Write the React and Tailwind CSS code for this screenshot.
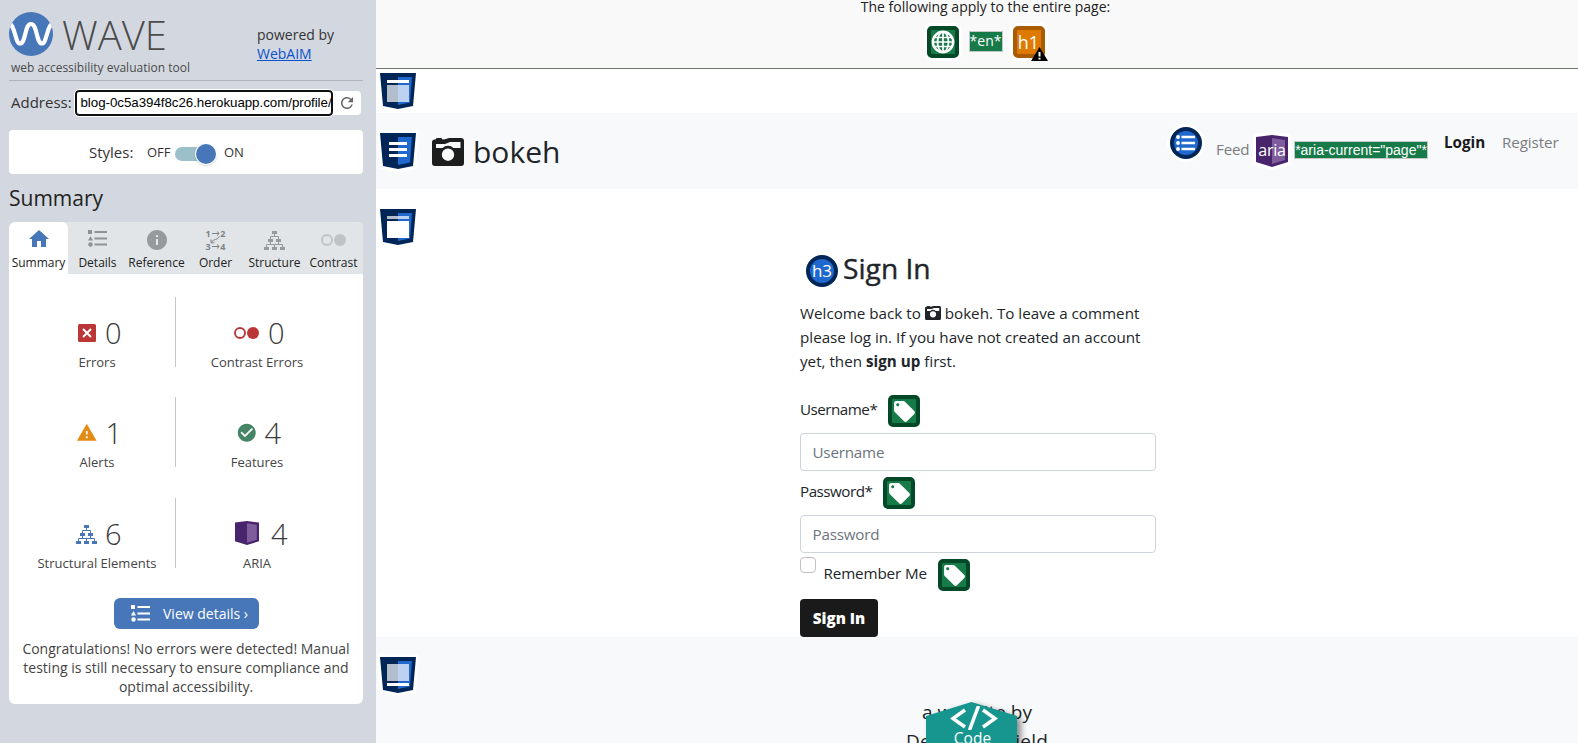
import React from 'react';
import { MdHome, MdInfo, MdCheckCircle, MdWarning, MdRefresh, MdLocalOffer } from 'react-icons/md';

function Logo() {
  return (
    <svg viewBox="0 0 44 44" className="size-11 shrink-0">
      <defs>
        <clipPath id="logo-disc"><circle cx="22" cy="22" r="22" /></clipPath>
      </defs>
      <circle cx="22" cy="22" r="22" fill="#4777b8" />
      <path clipPath="url(#logo-disc)" d="M-1 11C6 11 6 31.500 11 31.500C17 31.500 15.500 12 22 12C28.500 12 27 31.500 33 31.500C38 31.500 38 11 45 11" fill="none" stroke="#fff" strokeWidth="4.200" />
    </svg>
  );
}

function CameraIcon({ className }) {
  return (
    <svg viewBox="0 0 32 32" className={className} fill="currentColor" fillRule="evenodd">
      <path d="M4 2.500Q4 2 5 2H9Q10 2 10 3.200L12 3.500 17 2H29Q32 2 32 5V27Q32 30 29 30H3Q0 30 0 27V6Q0 3.500 4 3.200ZM4 8V12H10.500A8 8 0 0 1 21.500 12H28.500V6H18L13 8ZM16 12.500A6.200 6.200 0 1 0 16 24.900 6.200 6.200 0 1 0 16 12.500Z" />
    </svg>
  );
}

function ListIcon({ className }) {
  return (
    <svg viewBox="0 0 19 17" className={className} fill="currentColor">
      <rect x="0" y="0" width="4" height="4" />
      <path d="M2.500 6 5 10.500H0Z" />
      <circle cx="2.500" cy="14.500" r="2.200" />
      <rect x="6.500" y="1" width="12.500" height="2" />
      <rect x="6.500" y="7.500" width="12.500" height="2" />
      <rect x="6.500" y="13.500" width="12.500" height="2" />
    </svg>
  );
}

function TreeIcon({ className }) {
  return (
    <svg viewBox="0 0 21 19" className={className}>
      <path d="M10.500 2V6M6.500 8.500V5.500H14.500V8.500M6.500 9V13M14.500 9V13M2.500 17V13.500H18.500V17M10.500 13.500V17" fill="none" stroke="currentColor" />
      <path d="M8 0h5v3H8zM4 8h5v3H4zM12 8h5v3h-5zM0 16h5v3H0zM8 16h5v3H8zM16 16h5v3h-5z" fill="currentColor" />
    </svg>
  );
}

function CirclesIcon({ className }) {
  return (
    <svg viewBox="0 0 25 12" className={className}>
      <circle cx="6" cy="6" r="5" fill="none" stroke="currentColor" strokeWidth="1.900" />
      <circle cx="19" cy="6" r="6" fill="currentColor" />
    </svg>
  );
}

function OrderIcon() {
  return (
    <div className="relative flex h-[22px] w-5 flex-col justify-between text-[9px] leading-[9px] font-bold text-[#7f8386]">
      <div className="flex justify-between"><span>1</span><span>2</span></div>
      <div className="flex justify-between"><span>3</span><span>4</span></div>
      <svg viewBox="0 0 20 22" className="absolute inset-0 h-[22px] w-5" fill="none" stroke="currentColor" strokeWidth="1">
        <path d="M6 4.500H13M11 2.500 13.200 4.500 11 6.500M6 17.500H13M11 15.500 13.200 17.500 11 19.500M13.500 7.500Q12 10 9.500 10.500T5 13.500M5 10.500V13.800H8.500" />
      </svg>
    </div>
  );
}

function AriaBox({ className }) {
  return (
    <svg viewBox="0 0 32 32" className={className}>
      <path d="M0 2 16 0 32 2V27L16 32 0 27Z" fill="#48246d" />
      <path d="M16 3 29 5V25L16 29Z" fill="#7f5c9c" />
    </svg>
  );
}

function Shield({ children, halo }) {
  return (
    <svg viewBox="-3 -3 42 42" className="size-[42px] shrink-0">
      {halo && <path d="M-3 -3H39L36 36 18 39 0 36Z" fill="#fff" />}
      <path d="M0 0H36L33 33 18 36 3 33Z" fill="#002658" />
      <path d="M18 4H32L30 29.500 18 32Z" fill="#1f69ce" />
      {children}
    </svg>
  );
}

function TagIcon() {
  return (
    <span className="flex size-8 shrink-0 items-center justify-center rounded-[5px] border-4 border-[#034927] bg-[#177a49] text-white">
      <MdLocalOffer className="size-[25px] shrink-0" />
    </span>
  );
}

function GlobeIcon() {
  return (
    <span className="flex size-8 shrink-0 items-center justify-center rounded-[5px] border-4 border-[#034927] bg-[#177a49] ring-3 ring-white">
      <svg viewBox="0 0 24 24" className="size-6 shrink-0" fill="none" stroke="#fff" strokeWidth="1.800">
        <circle cx="12" cy="12" r="10.200" strokeWidth="2.400" />
        <ellipse cx="12" cy="12" rx="5.500" ry="10" />
        <path d="M12 2V22M3.200 7.500H20.800M2 12H22M3.200 16.500H20.800" strokeWidth="1.700" />
      </svg>
    </span>
  );
}

function HeadingIcon() {
  return (
    <div className="relative size-8 shrink-0">
      <span className="flex size-8 items-center justify-center rounded-[5px] border-4 border-[#aa5b00] bg-[#de7a02] text-[18px] leading-6 text-white ring-3 ring-white">h1</span>
      <svg viewBox="0 0 17 14" className="absolute top-[21px] left-[18px] h-[14px] w-[17px]">
        <path d="M8.500 0 17 14H0Z" />
        <path d="M7.500 5h2v4.500h-2zM7.500 10.800h2v1.700h-2z" fill="#fff" />
      </svg>
    </div>
  );
}

const tabs = [
  { label: 'Summary', icon: <MdHome className="size-6 text-[#4777b8]" />, active: true },
  { label: 'Details', icon: <ListIcon className="h-[17px] w-[19px] text-[#8f9294]" /> },
  { label: 'Reference', icon: <MdInfo className="mt-[3px] size-6 text-[#979a9c]" /> },
  { label: 'Order', icon: <div className="mt-0.5"><OrderIcon /></div> },
  { label: 'Structure', icon: <TreeIcon className="mt-[3px] h-[19px] w-[21px] text-[#979a9c]" /> },
  { label: 'Contrast', icon: <CirclesIcon className="mt-0.5 h-3 w-[25px] text-[#bfc3c6]" /> },
];

function Stat({ icon, value, className, gap = 'gap-[9px]' }) {
  return (
    <div className={className}>
      <div className={`flex h-10 items-center ${gap}`}>
        {icon}
        <span className="mt-px text-[29px] leading-10 font-[350] text-[#3b3b3b]">{value}</span>
      </div>
    </div>
  );
}

function StatRow({ left, right, leftLabel, rightLabel }) {
  return (
    <div className="flex h-[70px] pl-[10px] text-[13px] leading-[18px] text-[#444]">
      <div className="w-[157px] border-r border-[#c4c6c8] pt-[15px]">
        {left}
        <div className="mt-px text-center">{leftLabel}</div>
      </div>
      <div className="w-[162px] pt-[15px]">
        {right}
        <div className="mt-px text-center">{rightLabel}</div>
      </div>
    </div>
  );
}

function Sidebar() {
  return (
    <aside className="h-[743px] w-[376px] shrink-0 bg-[#d3d8e0] pr-[13px] pl-[9px] text-[#333]">
      <header className="h-[81px] border-b border-[#b0b5ba] pt-3">
        <div className="flex h-[47px]">
          <Logo />
          <span className="ml-[9px] w-[195px] text-[40px] leading-[46px] font-light text-[#4b4b4b]">WAVE</span>
          <div className="pt-[13px] text-sm leading-[19px]">
            powered by<br /><a className="text-[#0a53cc] underline">WebAIM</a>
          </div>
        </div>
        <div className="ml-0.5 text-xs leading-[17px] text-[#4a4a4a]">web accessibility evaluation tool</div>
      </header>
      <div className="mt-2 flex h-[27px] items-center">
        <label className="ml-0.5 w-[64px] text-[15px] leading-[27px]">Address:</label>
        <div className="flex h-[26px] w-[258px] items-center overflow-hidden rounded-[4px] border-2 border-[#101010] bg-white pl-[3.500px] font-['Liberation_Sans'] text-[13.33px] tracking-[-0.040px] whitespace-nowrap text-black outline outline-white">blog-0c5a394f8c26.herokuapp.com/profile/</div>
        <div className="flex h-6 w-7 items-center justify-center rounded-r-[4px] bg-white text-[#666]"><MdRefresh className="size-[18px]" /></div>
      </div>
      <div className="mt-[14px] flex h-11 items-center rounded-[4px] bg-white pl-20">
        <span className="w-[58px] text-[15px]">Styles:</span>
        <span className="mt-0.5 w-7 text-[13px]">OFF</span>
        <span className="mt-1 flex h-[14px] w-[41px] items-center justify-end rounded-full bg-[#9cc0ca]">
          <span className="size-5 shrink-0 rounded-full bg-[#4777b8] shadow-[0_1px_3px_rgba(0,0,0,0.4)] ring-1 ring-white" />
        </span>
        <span className="mt-0.5 ml-2 text-[13px]">ON</span>
      </div>
      <h2 className="mt-[10px] text-[21px] leading-7 text-[#222]">Summary</h2>
      <section className="mt-[10px] h-[482px] overflow-hidden rounded-md bg-white">
        <nav className="flex h-[52px] bg-[#e1e5e8]">
          {tabs.map((tab) => (
            <div key={tab.label} className={`flex w-[59px] shrink-0 flex-col items-center text-xs leading-4 whitespace-nowrap text-[#222] ${tab.active ? 'rounded-t-md bg-white' : ''}`}>
              <div className="flex h-[33px] items-center justify-center">{tab.icon}</div>
              <span>{tab.label}</span>
            </div>
          ))}
        </nav>
        <div className="flex flex-col gap-[30px] pt-[23px]">
          <StatRow
            leftLabel="Errors" rightLabel="Contrast Errors"
            left={<Stat className="pl-[59px]" value="0" icon={
              <svg viewBox="0 0 18 18" className="mt-0.5 size-[18px]"><rect width="18" height="18" rx="1.500" fill="#bb3737" /><path d="M5 5 13 13M13 5 5 13" stroke="#fff" strokeWidth="2" /></svg>
            } />}
            right={<Stat className="pl-[58px]" value="0" icon={<CirclesIcon className="mt-0.5 h-3 w-[25px] text-[#bb3737]" />} />}
          />
          <StatRow
            leftLabel="Alerts" rightLabel="Features"
            left={<Stat className="pl-[57px]" gap="gap-2" value="1" icon={<MdWarning className="mt-0.5 size-[21.500px] text-[#e28c16]" />} />}
            right={<Stat className="pl-[60px]" gap="gap-[7px]" value="4" icon={<MdCheckCircle className="mt-0.5 size-[21.500px] text-[#458464]" />} />}
          />
          <div className="pt-px">
            <StatRow
              leftLabel="Structural Elements" rightLabel="ARIA"
              left={<Stat className="pl-[57px]" gap="gap-2" value="6" icon={<TreeIcon className="mt-0.5 h-[19px] w-[21px] text-[#4777b8]" />} />}
              right={<Stat className="pl-[59px]" gap="gap-[12px]" value="4" icon={<AriaBox className="size-6" />} />}
            />
          </div>
        </div>
        <button className="mt-[30px] ml-[105px] flex h-[31px] w-[145px] items-center rounded-md bg-[#4777b8] pl-[17px] text-sm text-white">
          <ListIcon className="mr-[13px] h-[17px] w-[19px]" />View details ›
        </button>
        <p className="mt-[10px] text-center text-sm leading-[19px] text-[#444]">
          Congratulations! No errors were detected! Manual<br />testing is still necessary to ensure compliance and<br />optimal accessibility.
        </p>
      </section>
    </aside>
  );
}

function PageNotes() {
  return (
    <div className="flex h-[69px] flex-col items-center border-b border-[#6d756d] bg-[#f9f9f9]">
      <div className="-mt-[3px] ml-[17px] text-sm leading-[19px] text-[#222]">The following apply to the entire page:</div>
      <div className="mt-2.5 ml-[17px] flex h-8 items-center">
        <GlobeIcon />
        <span className="-mt-0.5 ml-[10px] flex h-[21px] w-[34px] items-center justify-center border border-[#c4c8c6] bg-[#177a49] text-sm text-white">*en*</span>
        <span className="w-[10px]" />
        <HeadingIcon />
      </div>
    </div>
  );
}

function Navbar() {
  return (
    <div className="flex h-[76px] bg-[#f7f9fb] pr-[19px]">
      <div className="pt-[17px] pl-px"><Shield halo><path d="M9 9H27V12H9zM9 15H27V18H9zM9 21H27V24H9z" fill="#fff" /></Shield></div>
      <CameraIcon className="mt-[23px] ml-[13px] size-8 text-[#1e1e1e]" />
      <span className="mt-[18px] ml-[9px] text-[30px] leading-[42px] text-[#212529]">bokeh</span>
      <div className="ml-auto flex text-[15.200px] leading-6 text-[#7c7d7f]">
        <svg viewBox="0 0 32 32" className="mt-[14px] size-8 overflow-visible">
          <circle cx="16" cy="16" r="19" fill="#fff" />
          <circle cx="16" cy="16" r="14" fill="#1f69ce" stroke="#002658" strokeWidth="4" />
          <path d="M11.500 10H25M11.500 16H25M11.500 22H25" stroke="#fff" strokeWidth="2.600" />
          <path d="M8 10h.01M8 16h.01M8 22h.01" stroke="#fff" strokeWidth="3.800" strokeLinecap="round" />
        </svg>
        <span className="mt-6 ml-[14px] w-10 tracking-[-0.200px]">Feed</span>
        <div className="relative mt-[22px] size-8 text-center text-white">
          <svg viewBox="0 0 38 38" className="absolute -top-[3px] -left-[3px] size-[38px]"><path d="M0 2 19 0 38 2V33L19 38 0 33Z" fill="#fff" /></svg>
          <AriaBox className="absolute inset-0 size-8" />
          <span className="relative text-base leading-[31px] tracking-[-0.200px]">aria</span>
        </div>
        <span className="mt-7 ml-1.5 flex h-[18px] w-[134px] items-center justify-center border border-[#c4c8c6] bg-[#177a49] font-['Liberation_Sans'] text-sm leading-4 text-white">*aria-current="page"*</span>
        <span className="mt-[17px] ml-4 w-[58px] font-bold text-[#1a1a1a]">Login</span>
        <span className="mt-[17px] w-[57px] tracking-[-0.100px]">Register</span>
      </div>
    </div>
  );
}

function SignIn() {
  return (
    <div className="flex h-[448px] bg-white">
      <div className="pt-[17px] pl-px"><Shield><path d="M7 7H29V10H7z" fill="#fff" opacity=".7" /><path d="M7 12H29V29H7z" fill="#fff" /></Shield></div>
      <form className="ml-[381px] w-[356px] pt-[62px] text-[15.200px] leading-6 text-[#212529]">
        <div className="flex h-[50px]">
          <span className="mt-1 ml-1.5 flex size-8 items-center justify-center rounded-full border-4 border-[#002658] bg-[#1f69ce] text-[17px] text-white">h3</span>
          <h3 className="mt-px ml-[5px] text-[28.200px] leading-[33px] font-medium [-webkit-text-stroke:0.400px_#212529]">Sign In</h3>
        </div>
        <p className="whitespace-nowrap">
          Welcome back to <CameraIcon className="inline size-4 align-[-2px]" /> bokeh. To leave a comment<br />
          please log in. If you have not created an account<br />
          yet, then <b>sign up</b> first.
        </p>
        <div className="mt-[22px] flex h-8">
          <span className="mt-0.5 w-[88px] tracking-[-0.500px]">Username*</span>
          <TagIcon />
        </div>
        <div className="mt-1.5 h-[38px] rounded-[4px] border border-[#ced4da] pt-1.5 pl-[11.500px] text-[#6c757d]"><span className="tracking-[-0.200px]">Username</span></div>
        <div className="mt-1.5 flex h-8">
          <span className="mt-0.5 w-[83px] tracking-[-0.500px]">Password*</span>
          <TagIcon />
        </div>
        <div className="mt-1.5 h-[38px] rounded-[4px] border border-[#ced4da] pt-1.5 pl-[11.500px] text-[#6c757d]"><span className="tracking-[-0.200px]">Password</span></div>
        <div className="mt-1 flex h-[34px]">
          <span className="size-4 rounded-[4px] border border-[#bfbfbf]" />
          <span className="mt-1 ml-[7.500px] w-[114.500px] tracking-[-0.120px]">Remember Me</span>
          <span className="mt-0.5 flex h-8"><TagIcon /></span>
        </div>
        <button type="button" className="mt-2 flex h-[38px] w-[78px] items-center justify-center rounded-[4px] bg-[#1a1a1a] font-extrabold text-white">Sign In</button>
      </form>
    </div>
  );
}

function Footer() {
  return (
    <div className="relative h-[106px] overflow-hidden bg-[#f7f9fb]">
      <div className="flex pt-[17px] pl-px"><Shield halo><path d="M7 7H29V24H7z" fill="#fff" opacity=".7" /><path d="M7 26H29V29H7z" fill="#fff" /></Shield></div>
      <p className="mt-[2px] text-center text-[19px] leading-[29px] text-[#212529]">a website by<br /><span className="tracking-[0.250px]">Dean Wakefield</span></p>
      <div className="absolute top-[65px] left-[550px] flex h-[105px] w-[91px] flex-col items-center">
        <svg viewBox="0 0 91 105" className="absolute inset-0 overflow-visible drop-shadow-[4px_3px_3px_rgba(0,0,0,0.45)]"><path d="M45.500 0 91 14V91L45.500 105 0 91V14Z" fill="#17968f" /></svg>
        <svg viewBox="0 0 48 24" className="relative mt-[4px] ml-1 h-6 w-12" fill="none" stroke="#fff" strokeWidth="3.500">
          <path d="M15 4 3 12.500 15 21M33 4 45 12.500 33 21M28.500 0 19.500 24" />
        </svg>
        <span className="relative -mt-px ml-0.5 text-[15.500px] leading-[18px] text-white">Code</span>
      </div>
    </div>
  );
}

export default function App() {
  return (
    <div className="flex h-[743px] w-[1578px] overflow-hidden font-['Open_Sans',sans-serif]">
      <Sidebar />
      <main className="flex w-[1202px] flex-col bg-white">
        <PageNotes />
        <div className="flex h-11 shrink-0 pt-px pl-px"><Shield><path d="M7 7H29V10H7z" fill="#fff" /><path d="M7 12H29V29H7z" fill="#fff" opacity=".7" /></Shield></div>
        <Navbar />
        <SignIn />
        <Footer />
      </main>
    </div>
  );
}
